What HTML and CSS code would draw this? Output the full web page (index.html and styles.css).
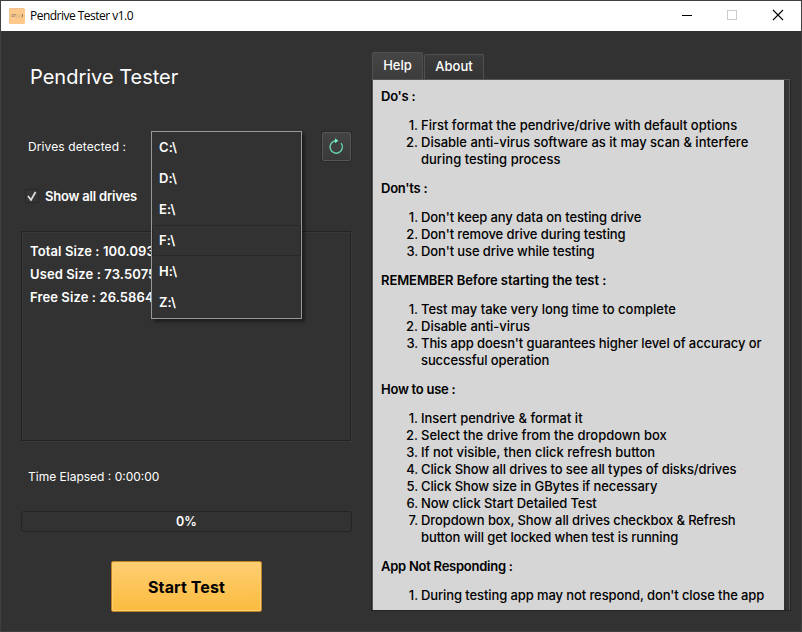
FILE: index.html
```html
<!DOCTYPE html>
<html lang="en">
<head>
<meta charset="utf-8">
<title>Pendrive Tester v1.0</title>
<link rel="stylesheet" href="styles.css">
</head>
<body>
<div class="window">
  <header class="titlebar">
    <svg class="app-icon" width="16" height="16" viewBox="0 0 16 16"><rect width="16" height="16" rx="1.5" fill="#fdc98b"/><path d="M0.5 15V1.5Q.5.5 1.5.5H15" fill="none" stroke="#efc18d"/><path d="M2 6h5v3H2z" fill="#e0b283"/><path d="M3 6.500h4M3 8.500h2" stroke="#b0957a"/><path d="M7 6h6l1 1v2l-1 1H7z" fill="#efc084"/><path d="M13.500 6v3" stroke="#8f7f6c"/></svg>
    <span class="caption">Pendrive Tester v1.0</span>
    <svg class="controls" width="104" height="12" viewBox="0 0 104 12"><path d="M0 6.5h10" stroke="#000"/><rect x="45.500" y="1.500" width="9" height="9" fill="none" stroke="#ccc"/><path d="M91 1l10 10M101 1L91 11" stroke="#000" stroke-width="1.100"/></svg>
  </header>
  <main class="content">
    <section class="left">
      <h1>Pendrive Tester</h1>
      <div class="drive-row">
        <span class="label drives">Drives detected :</span>
        <div class="combo">
          <ul class="dropdown">
            <li>C:\</li><li>D:\</li><li>E:\</li><li class="current">F:\</li><li>H:\</li><li>Z:\</li>
          </ul>
        </div>
        <button class="refresh" aria-label="Refresh"><svg width="16" height="18" viewBox="0 0 16 18"><path d="M13.100 6.100A6.200 6.200 0 1 1 7.500 3.800" fill="none" stroke="#68d3ae" stroke-width="1.400"/><path d="M7 1.200L10.300 3.700L7 6.200z" fill="#70f7c5"/></svg></button>
      </div>
      <label class="check"><span class="box"><svg width="14" height="14" viewBox="0 0 14 14"><path d="M3 7L6 11L10.500 3" fill="none" stroke="#e0e0e0" stroke-width="1.700"/></svg></span><span class="check-text">Show all drives</span></label>
      <div class="info">
        <p class="total">Total Size : 100.093</p>
        <p class="used">Used Size : 73.5075</p>
        <p class="free">Free Size : 26.5864</p>
      </div>
      <p class="label elapsed">Time Elapsed : 0:00:00</p>
      <div class="progress">0%</div>
      <button class="start">Start Test</button>
    </section>
    <section class="right">
      <nav class="tabs"><span class="tab active">Help</span><span class="tab">About</span></nav>
      <div class="pane">
        <article class="help">
          <h2>Do's :</h2>
          <ol><li class="full">First format the pendrive/drive with default options</li><li class="full">Disable anti-virus software as it may scan &amp; interfere<br>during testing process</li></ol>
          <h2>Don'ts :</h2>
          <ol><li>Don't keep any data on testing drive</li><li>Don't remove drive during testing</li><li>Don't use drive while testing</li></ol>
          <h2 class="remember">REMEMBER Before starting the test :</h2>
          <ol><li class="full">Test may take very long time to complete</li><li class="full">Disable anti-virus</li><li>This app doesn't guarantees higher level of accuracy or<br>successful operation</li></ol>
          <h2>How to use :</h2>
          <ol><li class="full">Insert pendrive &amp; format it</li><li class="full">Select the drive from the dropdown box</li><li class="full">If not visible, then click refresh button</li><li>Click Show all drives to see all types of disks/drives</li><li>Click Show size in GBytes if necessary</li><li>Now click Start Detailed Test</li><li>Dropdown box, Show all drives checkbox &amp; Refresh<br>button will get locked when test is running</li></ol>
          <h2>App Not Responding :</h2>
          <ol><li>During testing app may not respond, don't close the app</li></ol>
        </article>
      </div>
    </section>
  </main>
</div>
</body>
</html>
```

FILE: styles.css
```css
* { box-sizing: border-box; }
body { margin: 0; background: #323232; font-family: Inter, "Open Sans", sans-serif; }
h1, h2, p, ol, ul { margin: 0; padding: 0; font-weight: 500; }
button { padding: 0; font-family: inherit; }
.window { width: 802px; height: 632px; border: 1px solid #414041; background: #323232; display: flex; flex-direction: column; overflow: hidden; }
.titlebar { height: 30px; flex: none; background: #fff; display: flex; align-items: center; padding: 0 15px 0 8px; }
.app-icon { margin-bottom: 1px; }
.caption { margin-left: 5px; font: 12px/16px "Open Sans", sans-serif; letter-spacing: -0.52px; color: #000; }
.controls { margin-left: auto; margin-bottom: 2px; }
.content { flex: 1; display: flex; }
.left { width: 331px; margin-left: 20px; color: #fff; display: flex; flex-direction: column; }
h1 { margin: 32px 0 0 9px; font-size: 20px; line-height: 28px; font-weight: 400; }
.drive-row { height: 30px; margin-top: 40px; display: flex; align-items: center; }
.label { font-size: 12px; line-height: 16px; font-weight: 400; margin-left: 7px; }
.drives { width: 123px; margin-top: 2px; letter-spacing: 0.1px; }
.combo { width: 151px; height: 30px; position: relative; }
.dropdown { position: absolute; left: 0; top: 0; z-index: 2; width: 151px; height: 188px; border: 1px solid #989898; background: #323232; box-shadow: 3px 3px 3px rgba(0,0,0,.4); list-style: none; }
.dropdown li { height: 31px; border: 1px solid transparent; padding-left: 6px; font-size: 13px; line-height: 28px; font-weight: 600; letter-spacing: 0.1px; }
.dropdown .current { border-color: #282828; }
.refresh { width: 29px; height: 29px; margin: 1px 0 0 20px; border: 1px solid #565656; border-radius: 2px; background: linear-gradient(#434343, #393939); box-shadow: 0 0 0 1px #292929; display: flex; align-items: center; justify-content: center; }
.refresh svg { margin: 0 1px 1px 0; flex: none; }
.check { height: 16px; margin: 27px 0 0 4px; display: flex; align-items: center; }
.box { width: 14px; height: 14px; border: 1px solid #282828; background: #353535; display: flex; align-items: center; justify-content: center; }
.box svg { flex: none; }
.check-text { margin-left: 6px; font-size: 13px; line-height: 16px; font-weight: 600; letter-spacing: -0.2px; }
.info { width: 330px; height: 210px; margin-top: 27px; border: 1px solid #232323; box-shadow: 1px 1px 0 #393939, inset 1px 1px 0 #393939; padding: 8px; }
.info p { font-size: 13px; line-height: 23px; font-weight: 600; white-space: nowrap; letter-spacing: 0.1px; }
.elapsed { margin-top: 28px; }
.progress { height: 21px; margin-top: 26px; border: 1px solid #242424; border-radius: 3px; font-size: 12.5px; line-height: 19px; font-weight: 600; text-align: center; }
.start { width: 151px; height: 51px; margin: 29px 0 0 90px; border: 1px solid #bd8427; border-radius: 2px; background: linear-gradient(#ffce73, #fabb3e); box-shadow: inset 0 0 0 1px #ffce71; color: #000; font-size: 16px; font-weight: 700; letter-spacing: 0.1px; }
.right { width: 420px; margin: 20px 0 0 19px; color: #fff; display: flex; flex-direction: column; }
.tabs { height: 28px; display: flex; align-items: flex-end; padding-left: 1px; }
.tab { width: 60px; height: 25px; margin-left: 1px; border: 1px solid #505050; border-bottom: 0; border-radius: 2px 2px 0 0; background: linear-gradient(#3c3c3c, #343434); font-size: 13px; line-height: 23px; font-weight: 500; text-align: center; }
.tab.active { width: 51px; height: 27px; margin: 0; background: linear-gradient(#464646, #3c3c3c); line-height: 25px; }
.pane { height: 532px; border: 1px solid #232323; border-top-color: #555; box-shadow: inset 1px 0 0 #555, inset -1px 0 0 #555; padding-left: 1px; }
.help { width: 411px; height: 530px; background: #d6d6d6; color: #000; padding: 8px 0 0 8px; font-size: 13px; line-height: 17px; font-weight: 500; letter-spacing: -0.1px; overflow: hidden; white-space: nowrap; }
.help h2 { font-size: 13px; line-height: 17px; font-weight: 600; letter-spacing: -0.25px; }
.help .remember { letter-spacing: -0.08px; }
.help ol { margin: 12px 0; padding-left: 40px; list-style: none; counter-reset: step; }
.help li { position: relative; counter-increment: step; }
.help .full { letter-spacing: 0; }
.help li::before { content: counter(step) "."; position: absolute; right: 100%; margin-right: 3px; }
```
